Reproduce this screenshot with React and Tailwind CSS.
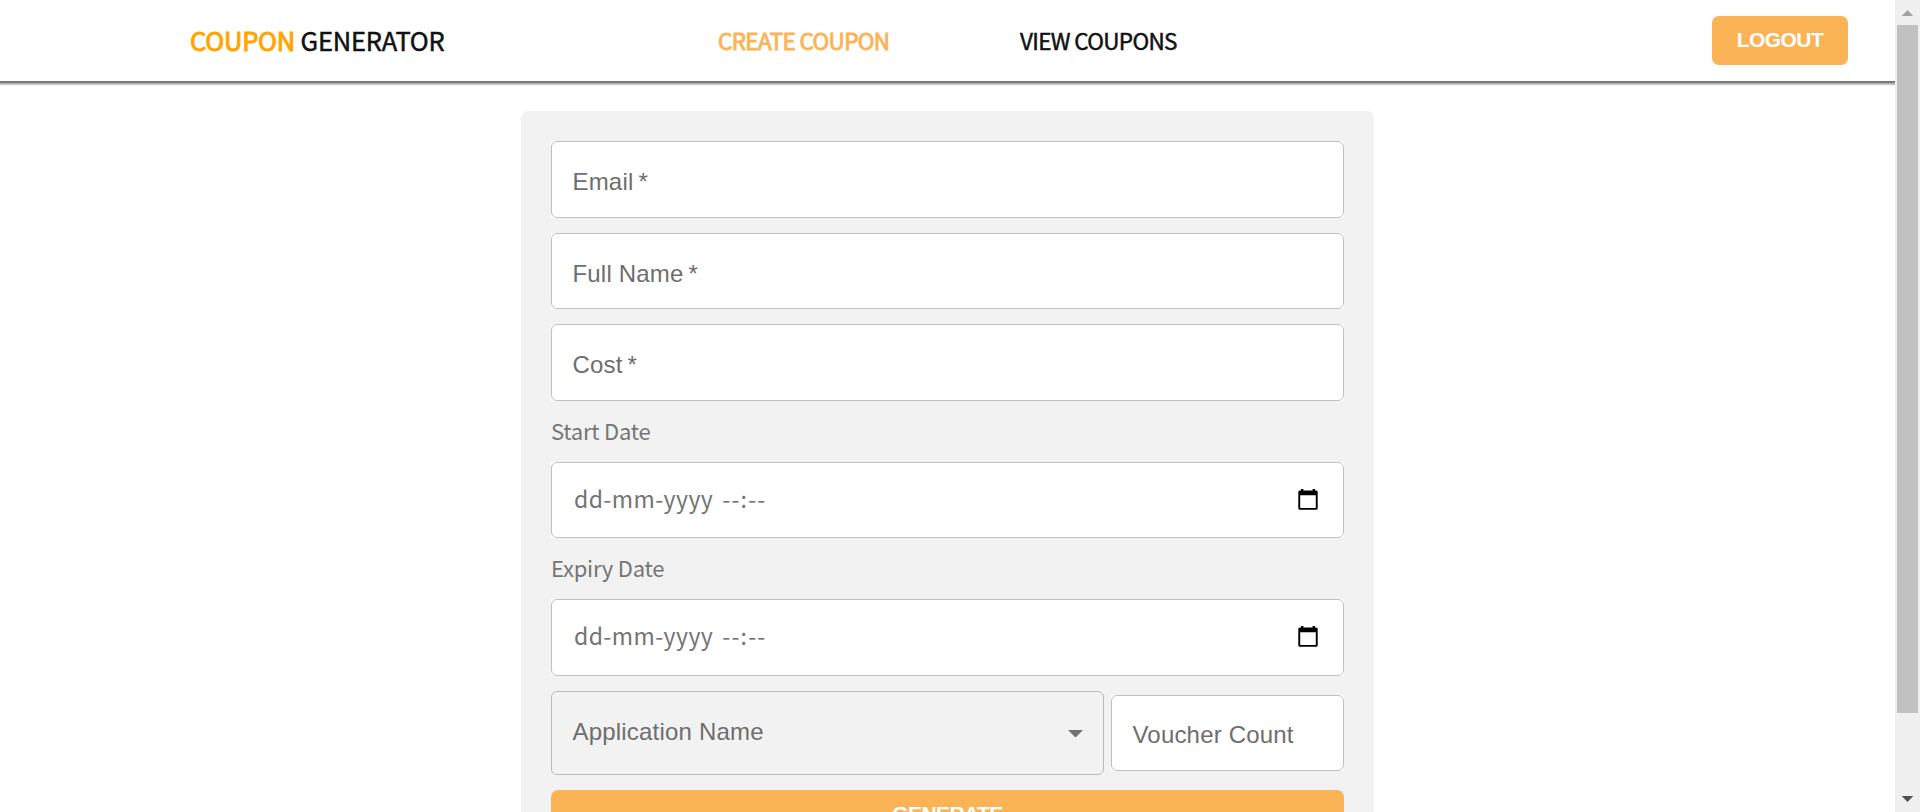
function CalendarIcon() {
  return (
    <svg className="-mt-[2px] h-[21px] w-[20px]" viewBox="0 0 20 21">
      <path d="M3 0h2.4v1.4h9.2V0H17v1.4h1.2a1.5 1.5 0 0 1 1.5 1.5v16.4a1.5 1.5 0 0 1-1.5 1.5H1.8a1.5 1.5 0 0 1-1.5-1.5V2.9a1.5 1.5 0 0 1 1.5-1.5H3zM2.2 6.2v12.7h15.6V6.2z" fill="#000" fillRule="evenodd" />
    </svg>
  );
}

function Field({ label, required, className, innerClassName = "pt-[5px]" }) {
  return (
    <div className={`bg-white ${className}`}>
      <div className={`flex h-full items-center rounded-[6px] border border-[#c0c0c0] px-[20.5px] text-[24px] leading-7 tracking-[0.18px] whitespace-nowrap text-[#6e6e6e] ${innerClassName}`}>
        <span>{label}</span>
        {required && <span className="ml-[5px]">*</span>}
      </div>
    </div>
  );
}

function DateField({ label, className }) {
  return (
    <>
      <div className="mt-[13px] h-8 font-['Noto_Sans_CJK_SC','Noto_Sans',sans-serif] text-[22px] leading-8 tracking-[-0.24px] text-[#757575]">
        {label}
      </div>
      <div className={`mt-4 bg-white ${className}`}>
        <div className="flex h-full items-center justify-between rounded-[6px] border border-[#c0c0c0] pr-[25px] pl-[22px]">
          <div className="-mt-[5px] flex gap-[9px] font-['Noto_Sans_CJK_SC','Noto_Sans',sans-serif] text-[23px] leading-8 text-[#737373]">
            <span className="tracking-[0.42px]">dd-mm-yyyy</span>
            <span className="tracking-[1.2px]">--:--</span>
          </div>
          <CalendarIcon />
        </div>
      </div>
    </>
  );
}

function Header() {
  return (
    <header className="flex h-[86px] shrink-0 flex-col">
      <div className="flex h-[81px] items-start font-['Noto_Sans_CJK_SC','Noto_Sans',sans-serif]">
        <div className="mt-5 ml-[190px] w-[528px] text-[25.5px] leading-10 tracking-[-0.2px] whitespace-nowrap text-[#111]">
          <span className="text-[#ffa500] [-webkit-text-stroke:1px_#ffa500]">COUPON</span>
          <span className="[-webkit-text-stroke:0.5px_#111]"> GENERATOR</span>
        </div>
        <a className="mt-5 w-[302px] text-[22.5px] leading-10 tracking-[-0.64px] whitespace-nowrap text-[#fbb455] [-webkit-text-stroke:0.9px_#fbb455]">CREATE COUPON</a>
        <a className="mt-5 text-[22.5px] leading-10 tracking-[-0.66px] whitespace-nowrap text-[#111] [-webkit-text-stroke:0.5px_#111]">VIEW COUPONS</a>
        <button className="mt-4 mr-[47px] ml-auto h-[49px] w-[136px] rounded-[7px] bg-[#fbb455] pb-[2px] font-['Liberation_Sans',Arial,sans-serif] text-[21px] font-bold tracking-[-0.55px] text-white">LOGOUT</button>
      </div>
      <div className="h-px bg-[#707070]" />
      <div className="h-px bg-[#858585]" />
      <div className="h-px bg-[#a8a8a8]" />
      <div className="h-px bg-[#d0d0d0]" />
      <div className="h-px bg-[#f0f0f0]" />
    </header>
  );
}

function Scrollbar() {
  return (
    <div className="flex h-full w-[25px] flex-col items-center bg-[#f0f0f0]">
      <svg className="h-[25px] w-[25px] shrink-0" viewBox="0 0 25 25"><path d="M6.7 16 12.5 10l5.8 6z" fill="#a0a0a0" /></svg>
      <div className="h-[688px] w-[21px] bg-[#c1c1c1]" />
      <svg className="mt-auto h-[25px] w-[25px] shrink-0" viewBox="0 0 25 25"><path d="M6.7 9h11.6l-5.8 6z" fill="#505050" /></svg>
    </div>
  );
}

export default function App() {
  return (
    <div className="flex h-[812px] w-[1920px] overflow-hidden bg-white font-['Liberation_Sans',Arial,sans-serif]">
      <div className="flex h-full w-[1895px] flex-col overflow-hidden">
        <Header />
        <main className="mt-[25px] ml-[521px] h-[760px] w-[853px] shrink-0 rounded-[7px] bg-[#f2f2f2] p-[30px]">
          <Field label="Email" required className="h-[77px]" />
          <Field label="Full Name" required className="mt-[15px] h-[76px]" />
          <Field label="Cost" required className="mt-[15px] h-[77px]" />
          <DateField label="Start Date" className="h-[76px]" />
          <DateField label="Expiry Date" className="h-[77px]" />
          <div className="mt-[15px] flex h-[84px] items-center justify-between">
            <div className="flex h-[84px] w-[553px] items-center justify-between rounded-[6px] border border-[#bababa] px-[20.5px] text-[24px] leading-7 tracking-[0.2px] text-[#6e6e6e]">
              <span className="-mt-[2px]">Application Name</span>
              <svg className="mt-[2px] h-2 w-[15px]" viewBox="0 0 15 8"><path d="M0 0h15L7.5 7.5z" fill="#707070" /></svg>
            </div>
            <Field label="Voucher Count" className="h-[76px] w-[233px]" innerClassName="pt-[3px]" />
          </div>
          <button className="mt-[15px] block h-[49px] w-full rounded-[7px] bg-[#fbb455] pb-[2px] text-[21px] font-bold tracking-[-0.6px] text-white">GENERATE</button>
        </main>
      </div>
      <Scrollbar />
    </div>
  );
}
